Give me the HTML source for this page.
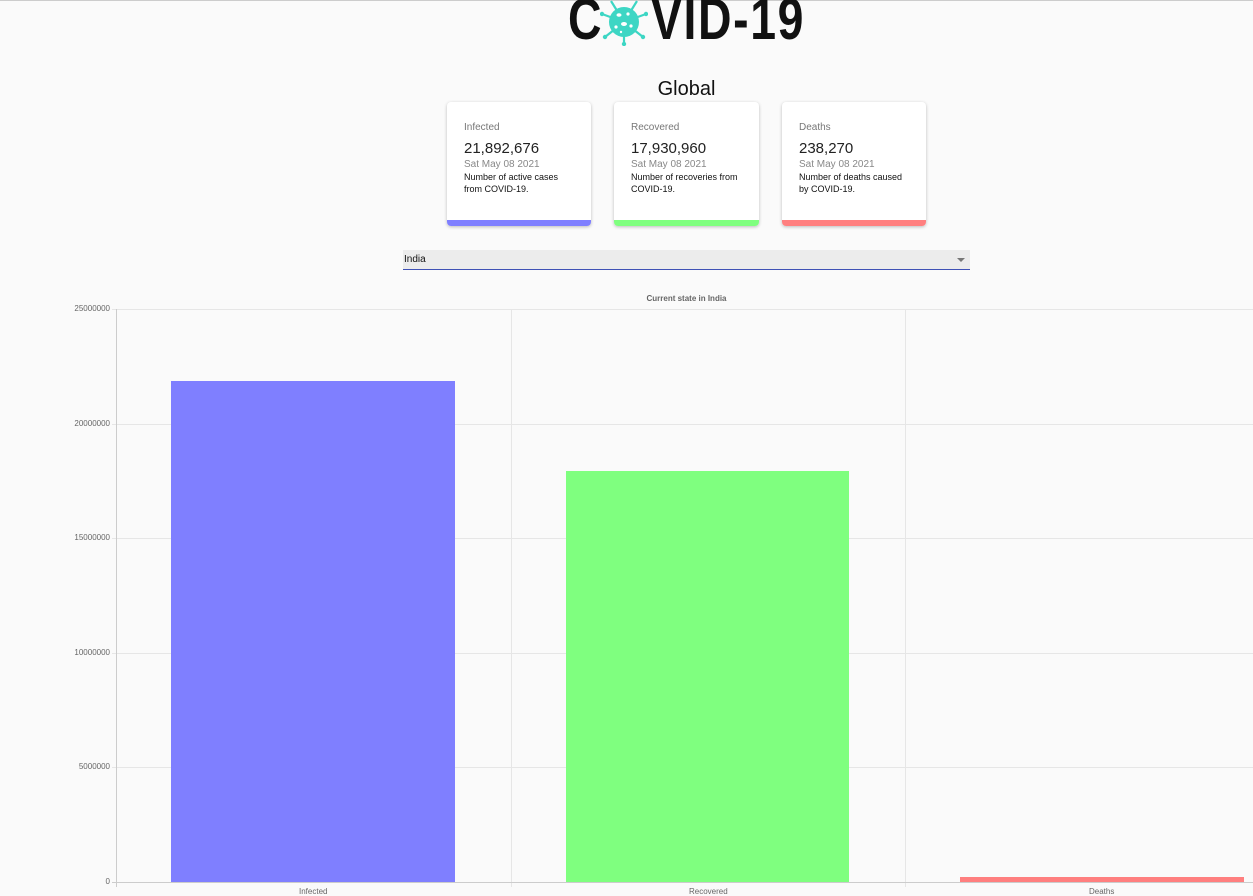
<!DOCTYPE html>
<html><head><style>
body{margin:0;width:1253px;height:895px;background:#fafafa;font-family:"Liberation Sans",sans-serif;position:relative;overflow:hidden}
.lg{position:absolute;top:-14px;font-size:58px;font-weight:bold;color:#111;white-space:nowrap;transform-origin:0 0;transform:scaleX(0.8);letter-spacing:2px}
.card{position:absolute;top:102px;width:144px;height:124px;background:#fff;border-radius:4px;box-shadow:0 1px 3px rgba(0,0,0,.25);overflow:hidden;box-sizing:border-box;padding:20px 0 0 17px}
.card .t{font-size:10px;color:#777}
.card .n{font-size:15px;color:#222;margin-top:7px}
.card .d{font-size:10px;color:#888;margin-top:2px}
.card .x{font-size:9px;color:#111;line-height:12px;margin-top:1px}
.card .b{position:absolute;left:0;right:0;bottom:0;height:6px}
.ax{position:absolute;font-size:8px;color:#666}
</style></head><body>
<div style="position:absolute;left:0;top:0;width:1253px;height:1px;background:#ccc"></div>
<div class="lg" style="left:568px">C</div>
<div class="lg" style="left:651px">VID-19</div>
<svg style="position:absolute;left:600px;top:0" width="48" height="46" viewBox="0 0 48 46">
<g stroke="#3dd6c4" stroke-width="2.2"><line x1="24" y1="22" x2="24" y2="44"/><line x1="24" y1="22" x2="2" y2="14"/><line x1="24" y1="22" x2="46" y2="14"/><line x1="24" y1="22" x2="5" y2="37"/><line x1="24" y1="22" x2="43" y2="37"/><line x1="24" y1="22" x2="11" y2="1"/><line x1="24" y1="22" x2="37" y2="1"/></g>
<circle cx="24" cy="22" r="15" fill="#3dd6c4"/>
<g fill="#fff"><ellipse cx="19" cy="15" rx="2.5" ry="1.8"/><circle cx="28" cy="14" r="1.6"/><ellipse cx="24" cy="24" rx="3" ry="2"/><circle cx="31" cy="26" r="1.6"/><circle cx="16" cy="27" r="1.6"/><circle cx="21" cy="32" r="1.2"/></g>
<g fill="#3dd6c4"><circle cx="24" cy="44" r="2.2"/><circle cx="2" cy="14" r="2.2"/><circle cx="46" cy="14" r="2.2"/><circle cx="5" cy="37" r="2.2"/><circle cx="43" cy="37" r="2.2"/></g>
</svg>
<div style="position:absolute;left:0;width:1373px;top:78px;text-align:center;font-size:20px;color:#111">Global</div>
<div class="card" style="left:447px"><div class="t">Infected</div><div class="n">21,892,676</div><div class="d">Sat May 08 2021</div><div class="x">Number of active cases<br>from COVID-19.</div><div class="b" style="background:#7f7fff"></div></div>
<div class="card" style="left:614px;width:145px"><div class="t">Recovered</div><div class="n">17,930,960</div><div class="d">Sat May 08 2021</div><div class="x">Number of recoveries from<br>COVID-19.</div><div class="b" style="background:#7fff7f"></div></div>
<div class="card" style="left:782px"><div class="t">Deaths</div><div class="n">238,270</div><div class="d">Sat May 08 2021</div><div class="x">Number of deaths caused<br>by COVID-19.</div><div class="b" style="background:#ff7f7f"></div></div>
<div style="position:absolute;left:403px;top:250px;width:567px;height:20px;background:#ececec;border-bottom:1px solid #3f51b5;font-size:10px;color:#111;line-height:19px;box-sizing:border-box;padding-left:1px">India<span style="position:absolute;right:5px;top:8px;border:4px solid transparent;border-top-color:#777;border-bottom:0"></span></div>
<div class="ax" style="left:0;width:1373px;text-align:center;top:294px;font-weight:bold;color:#666">Current state in India</div>
<svg style="position:absolute;left:0;top:0" width="1253" height="895">
<g stroke="#e6e6e6" stroke-width="1">
<line x1="112" y1="309.5" x2="1253" y2="309.5"/><line x1="112" y1="424.5" x2="1253" y2="424.5"/><line x1="112" y1="538.5" x2="1253" y2="538.5"/><line x1="112" y1="653.5" x2="1253" y2="653.5"/><line x1="112" y1="767.5" x2="1253" y2="767.5"/>
<line x1="511.5" y1="309" x2="511.5" y2="887"/><line x1="905.5" y1="309" x2="905.5" y2="887"/>
</g>
<line x1="116.5" y1="309" x2="116.5" y2="887" stroke="#ccc"/>
<line x1="112" y1="882.5" x2="1253" y2="882.5" stroke="#ccc"/>
<rect x="171" y="381" width="284" height="501" fill="#7f7fff"/>
<rect x="566" y="471" width="283" height="411" fill="#7fff7f"/>
<rect x="960" y="877" width="284" height="5" fill="#ff7f7f"/>
</svg>
<div class="ax" style="right:1143px;top:304px">25000000</div>
<div class="ax" style="right:1143px;top:419px">20000000</div>
<div class="ax" style="right:1143px;top:533px">15000000</div>
<div class="ax" style="right:1143px;top:648px">10000000</div>
<div class="ax" style="right:1143px;top:762px">5000000</div>
<div class="ax" style="right:1143px;top:877px">0</div>
<div class="ax" style="left:299px;top:887px">Infected</div>
<div class="ax" style="left:689px;top:887px">Recovered</div>
<div class="ax" style="left:1089px;top:887px">Deaths</div>
</body></html>
